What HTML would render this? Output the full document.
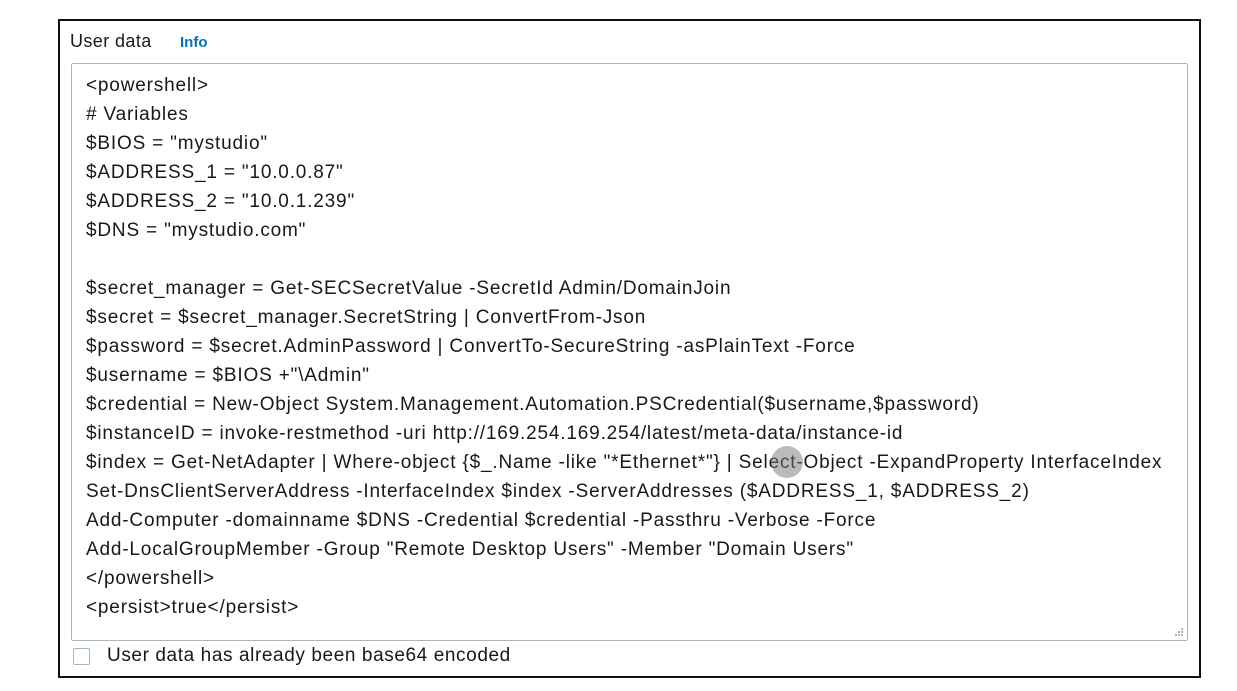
<!DOCTYPE html>
<html><head><meta charset="utf-8"><style>
html,body{margin:0;padding:0;background:#fff;width:1237px;height:691px;overflow:hidden}
body{font-family:"Liberation Sans",sans-serif;color:#16191f}
.outer{position:absolute;left:58px;top:19px;width:1143px;height:659px;border:2px solid #111;box-sizing:border-box}
.lab{position:absolute;left:70px;top:31px;font-size:18px;letter-spacing:0.4px;color:#16191f}
.info{position:absolute;left:180px;top:34px;font-size:15px;font-weight:bold;color:#0073bb}
.ta{position:absolute;left:71px;top:63px;width:1117px;height:578px;border:1px solid #aab7b8;border-radius:2px;box-sizing:border-box}
.code{position:absolute;left:86px;top:71px;font-size:19px;line-height:29px;white-space:pre;letter-spacing:0.82px}
.cb{position:absolute;left:73px;top:648px;width:17px;height:17px;border:1px solid #aab7b8;border-radius:2px;box-sizing:border-box}
.cbl{position:absolute;left:107px;top:645px;font-size:19px;letter-spacing:0.6px}
.dot{position:absolute;left:771px;top:446px;width:32px;height:32px;border-radius:50%;background:rgba(120,120,120,.5)}
.grip{position:absolute;left:1174px;top:627px}
</style></head><body>
<div class="outer"></div>
<div class="lab">User data</div><div class="info">Info</div>
<div class="ta"></div>
<div class="code">&lt;powershell&gt;
# Variables
$BIOS = "mystudio"
$ADDRESS_1 = "10.0.0.87"
$ADDRESS_2 = "10.0.1.239"
$DNS = "mystudio.com"

$secret_manager = Get-SECSecretValue -SecretId Admin/DomainJoin
$secret = $secret_manager.SecretString | ConvertFrom-Json
$password = $secret.AdminPassword | ConvertTo-SecureString -asPlainText -Force
$username = $BIOS +"\Admin"
$credential = New-Object System.Management.Automation.PSCredential($username,$password)
$instanceID = invoke-restmethod -uri http://169.254.169.254/latest/meta-data/instance-id
$index = Get-NetAdapter | Where-object {$_.Name -like "*Ethernet*"} | Select-Object -ExpandProperty InterfaceIndex
Set-DnsClientServerAddress -InterfaceIndex $index -ServerAddresses ($ADDRESS_1, $ADDRESS_2)
Add-Computer -domainname $DNS -Credential $credential -Passthru -Verbose -Force
Add-LocalGroupMember -Group "Remote Desktop Users" -Member "Domain Users"
&lt;/powershell&gt;
&lt;persist&gt;true&lt;/persist&gt;</div>
<div class="dot"></div>
<svg class="grip" width="10" height="10"><g fill="#aab7b8"><rect x="7" y="1" width="2" height="2"/><rect x="4" y="4" width="2" height="2"/><rect x="7" y="4" width="2" height="2"/><rect x="1" y="7" width="2" height="2"/><rect x="4" y="7" width="2" height="2"/><rect x="7" y="7" width="2" height="2"/></g></svg>
<div class="cb"></div>
<div class="cbl">User data has already been base64 encoded</div>
</body></html>
